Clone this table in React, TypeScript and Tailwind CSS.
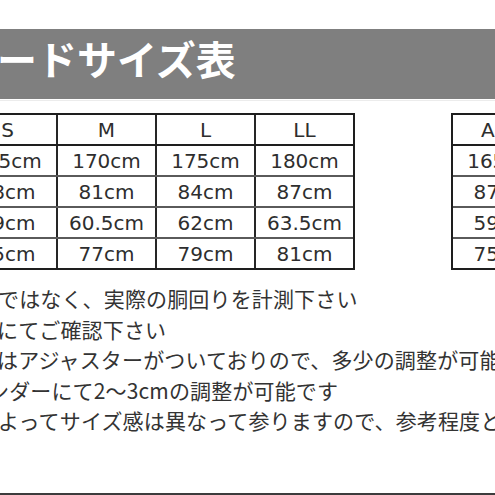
import React from "react";

const jp = { fontFamily: '"Noto Sans CJK JP", "Noto Sans", sans-serif' };
const dv = { fontFamily: '"DejaVu Sans", Verdana, sans-serif' };

function Row({ cells, line }: { cells: string[]; line?: string }) {
  return (
    <>
      {line && <div className={line} />}
      <div className="grid grid-cols-[97px_97px_97px_97px] gap-x-[2px] bg-[#262626]">
        {cells.map((c, i) => (
          <div
            key={i}
            className="h-[29px] bg-white flex items-center justify-center text-[20px] text-[#2e2e2e] leading-none whitespace-nowrap"
            style={dv}
          >
            {c}
          </div>
        ))}
      </div>
    </>
  );
}

function SizeTable({ rows }: { rows: string[][] }) {
  return (
    <div className="flex flex-col border-2 border-[#1e1e1e] bg-white shrink-0">
      <Row cells={rows[0]} />
      <Row cells={rows[1]} line="h-[2px] bg-[#1e1e1e]" />
      <Row cells={rows[2]} line="h-[2px] bg-[#5a5a5a]" />
      <Row cells={rows[3]} line="h-[2px] bg-[#5a5a5a]" />
      <Row cells={rows[4]} line="h-[2px] bg-[#5a5a5a]" />
    </div>
  );
}

export default function App() {
  const left = [
    ["S", "M", "L", "LL"],
    ["165cm", "170cm", "175cm", "180cm"],
    ["78cm", "81cm", "84cm", "87cm"],
    ["59cm", "60.5cm", "62cm", "63.5cm"],
    ["75cm", "77cm", "79cm", "81cm"],
  ];
  const right = [
    ["ABC", "", "", ""],
    ["165cm", "", "", ""],
    ["87cm", "", "", ""],
    ["59cm", "", "", ""],
    ["75cm", "", "", ""],
  ];
  const lines: [string, string][] = [
    ["ml-[-2px]", "ではなく、実際の胴回りを計測下さい"],
    ["ml-[-3px]", "にてご確認下さい"],
    ["ml-[-3px]", "はアジャスターがついておりので、多少の調整が可能です"],
    ["ml-[-12px]", "ンダーにて2～3cmの調整が可能です"],
    ["ml-[-2px]", "よってサイズ感は異なって参りますので、参考程度とお考え下さい"],
  ];
  return (
    <div className="w-[495px] h-[495px] overflow-hidden bg-white flex flex-col relative">
      <div className="mt-[29px] h-[70px] bg-[#7f7f7f] shrink-0 overflow-hidden">
        <div
          className="ml-[-3px] mt-[9px] text-[40px] leading-[40px] font-bold text-white whitespace-nowrap"
          style={jp}
        >
          ードサイズ表
        </div>
      </div>
      <div className="h-px bg-[#ececec] mt-[1px] shrink-0" />
      <div className="mt-[12px] flex ml-[-43px] gap-[96px] shrink-0">
        <SizeTable rows={left} />
        <SizeTable rows={right} />
      </div>
      <div className="mt-[13px] flex flex-col shrink-0">
        {lines.map(([m, t], i) => (
          <div
            key={i}
            className={`${m} text-[21px] leading-[30.5px] tracking-[0.15px] text-[#333] whitespace-nowrap`}
            style={jp}
          >
            {t}
          </div>
        ))}
      </div>
      <div className="absolute left-0 right-0 bottom-0 h-[2px] bg-[#3c3c3c]" />
    </div>
  );
}
